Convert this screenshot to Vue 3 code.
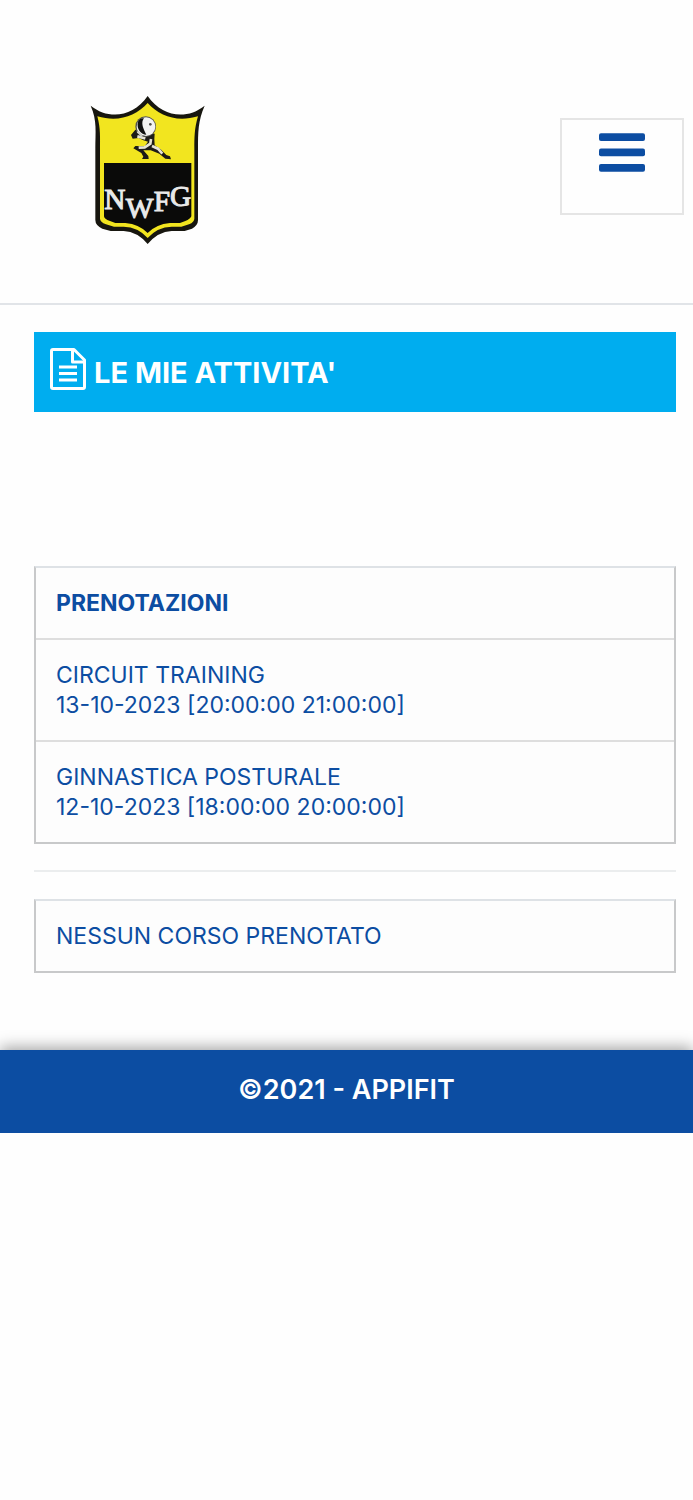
<template>
  <div class="page">
    <header class="header">
      <a href="#" class="header__logo" aria-label="NWFG">
        <svg class="logo" viewBox="30 30 345 450">
          <path
            d="M32 62 C85 104 157 98 203 33 C249 98 321 104 374 62 C354 107 354 143 354 190 V405 Q354 421 336 431 L314 438 H275 Q234 440 203 477 Q172 440 131 438 H92 L67 431 Q46 421 46 405 V190 C46 143 52 107 32 62Z"
            fill="#17160f"
          />
          <path
            d="M52 94 C115 112 167 94 203 54 C239 94 291 112 354 94 C343 130 343 160 343 190 V401 Q343 411 327 418 L304 425 H275 Q232 426 203 459 Q174 426 131 425 H102 L78 418 Q60 411 60 401 V190 C60 160 62 130 52 94Z"
            fill="#f2e51f"
          />
          <path
            d="M72 234 H334 V394 Q331 402 316 408 L300 414 H270 Q228 418 203 444 Q178 418 136 414 H106 L90 408 Q72 402 72 394Z"
            fill="#0a0a09"
          />
          <path
            d="M166 134 L153 150 L158 161 L176 159 L190 166 L204 170 L194 184 L166 183 L160 190 L184 204 L190 215 L186 222 L206 222 L205 213 L190 196 L212 196 L238 206 L256 221 L273 223 L270 214 L259 210 L242 193 L224 181 L223 162 L224 146Z"
            fill="#1c1b17"
          />
          <path
            d="M172 154 L196 160 M213 162 L211 176 L194 187 L176 188 M216 183 L234 191 L247 206"
            fill="none"
            stroke="#e6e3d5"
            stroke-width="8"
          />
          <circle cx="197" cy="125" r="31" fill="#55544e" />
          <circle cx="198" cy="125" r="28" fill="#f4f4f1" />
          <path
            d="M174 110 C178 101 187 98 192 100 C181 113 190 132 199 149 C184 149 168 132 174 110Z"
            fill="#11110f"
          />
          <path d="M172 140 Q180 146 186 155" fill="none" stroke="#cfcfc8" stroke-width="6" />
          <circle cx="211" cy="118" r="4" fill="#514f4a" />
          <g class="logo__letters">
            <text x="73" y="372">N</text>
            <text x="137" y="398">W</text>
            <text x="221" y="378">F</text>
            <text x="270" y="362">G</text>
          </g>
        </svg>
      </a>
      <button type="button" class="menu-button" aria-label="Menu">
        <svg class="menu-button__icon" viewBox="0 0 46 40">
          <rect y="1.3" width="46" height="7.7" rx="2" />
          <rect y="16.6" width="46" height="7.7" rx="2" />
          <rect y="32" width="46" height="7.7" rx="2" />
        </svg>
      </button>
    </header>

    <main class="content">
      <h1 class="title">
        <svg class="title__icon" viewBox="0 0 36 42" aria-hidden="true">
          <path d="M3 1.5 H24 L34.5 12 V39 Q34.5 40.5 33 40.5 H3 Q1.5 40.5 1.5 39 V3 Q1.5 1.5 3 1.5Z" />
          <path d="M22.5 2 V14 H34" />
          <path d="M9 19 H27 M9 25.5 H27 M9 32 H27" />
        </svg>
        <span class="title__text">LE MIE ATTIVITA'</span>
      </h1>

      <table class="table">
        <thead>
          <tr>
            <th scope="col">PRENOTAZIONI</th>
          </tr>
        </thead>
        <tbody>
          <tr v-for="booking in bookings" :key="booking.name">
            <td>{{ booking.name }}<br>{{ booking.date }} [{{ booking.from }} {{ booking.to }}]</td>
          </tr>
        </tbody>
      </table>

      <hr class="divider">

      <table class="table">
        <tbody>
          <tr>
            <td>NESSUN CORSO PRENOTATO</td>
          </tr>
        </tbody>
      </table>
    </main>

    <footer class="footer">©2021 - APPIFIT</footer>
  </div>
</template>

<script setup>
 const bookings = [
   { name: 'CIRCUIT TRAINING', date: '13-10-2023', from: '20:00:00', to: '21:00:00' },
   { name: 'GINNASTICA POSTURALE', date: '12-10-2023', from: '18:00:00', to: '20:00:00' }
 ]
</script>

<style>
body {
  margin: 0;
  background: #fefefe;
}
</style>

<style scoped>
.page {
  color: #0c4da2;
  font-family: Inter, "Liberation Sans", sans-serif;
  font-size: 23px;
  line-height: 30px;
}

.header {
  display: flex;
  align-items: flex-start;
  justify-content: space-between;
  padding: 95px 9px 58px 90px;
  border-bottom: 2px solid #e1e4e8;
}

.header__logo {
  display: block;
}

.logo {
  display: block;
  width: 115px;
  height: 150px;
}

.logo__letters {
  fill: #e9e9e9;
  stroke: #e9e9e9;
  stroke-width: 3;
  font-family: "Liberation Serif", serif;
  font-size: 88px;
}

.menu-button {
  display: flex;
  align-items: flex-start;
  justify-content: center;
  width: 124px;
  height: 97px;
  margin-top: 23px;
  padding: 12px 0 0;
  border: 2px solid #e5e5e5;
  background: transparent;
}

.menu-button__icon {
  width: 46px;
  height: 40px;
  fill: #0c4da2;
}

.content {
  padding: 27px 17px 77px 34px;
}

.title {
  display: flex;
  align-items: flex-start;
  gap: 8px;
  margin: 0 0 154px;
  padding: 16px 16px 22px;
  background: #00adef;
  color: #fff;
  font-size: 29px;
  font-weight: 700;
  line-height: 42px;
}

.title__text {
  padding-top: 4px;
  margin-bottom: -4px;
}

.title__icon {
  width: 36px;
  height: 42px;
  fill: none;
  stroke: #fff;
  stroke-width: 3;
  stroke-linejoin: round;
}

.table {
  width: 100%;
  border: 2px solid #c8c9ca;
  border-top-color: #dee2e6;
  border-spacing: 0;
  background: #fdfdfd;
}

.table th,
.table td {
  padding: 20px;
  text-align: left;
}

.table th {
  font-weight: 700;
}

.table thead + tbody td {
  border-top: 2px solid #dedede;
}

.divider {
  height: 2px;
  margin: 26px 0 27px;
  border: 0;
  background: #ebedee;
}

.footer {
  padding: 25px 16px 28px;
  background: #0c4da2;
  box-shadow: 0 -3px 14px rgba(0, 0, 0, 0.35);
  color: #fff;
  font-size: 27px;
  font-weight: 600;
  text-align: center;
}
</style>
